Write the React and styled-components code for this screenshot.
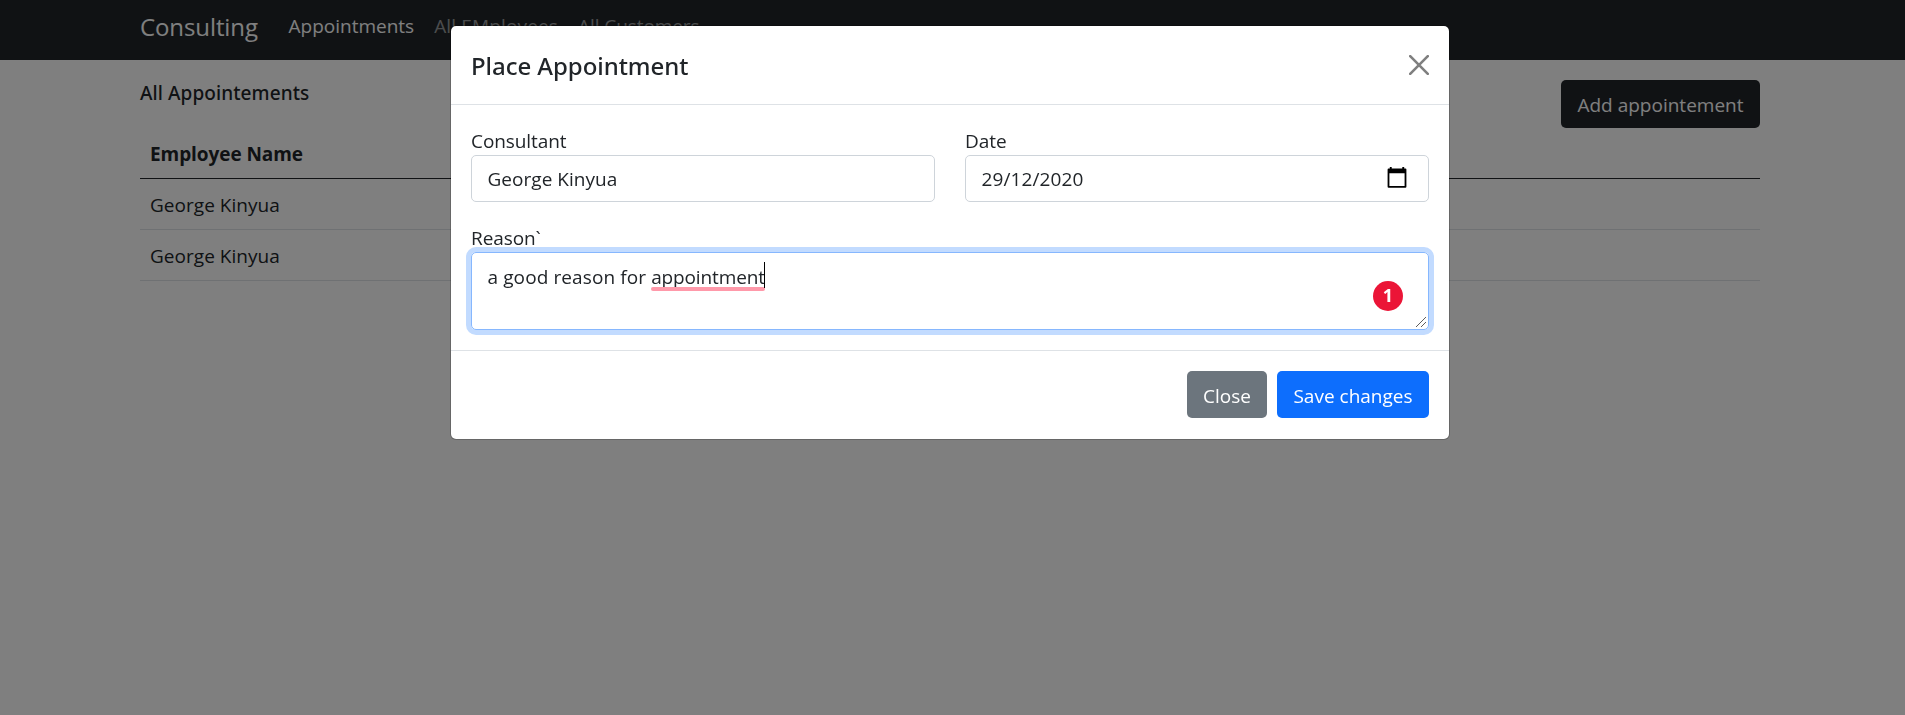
import React from 'react';
import styled, { createGlobalStyle } from 'styled-components';

const GlobalStyle = createGlobalStyle`
  *, *::before, *::after { box-sizing: border-box; }
  body {
    margin: 0;
    background: #fff;
    color: #212529;
    font-family: "Open Sans", "Noto Sans", sans-serif;
    font-size: 19px;
    line-height: 30px;
    overflow: hidden;
  }
`;

const Page = styled.div`
  min-height: 100vh;
`;

const Container = styled.div`
  width: 1620px;
  margin-left: 140px;
`;

const Navbar = styled.nav`
  height: 60px;
  background: #212529;
`;

const NavRow = styled(Container)`
  display: flex;
  align-items: flex-start;
`;

const Brand = styled.span`
  width: 148.5px;
  font-size: 24px;
  line-height: 53px;
  letter-spacing: -0.1px;
  color: #fff;
`;

const NavLink = styled.a`
  margin-right: 20px;
  line-height: 52px;
  letter-spacing: ${(p) => p.$tracking || 0}px;
  color: ${(p) => (p.$active ? '#fff' : 'rgba(255, 255, 255, 0.55)')};
  white-space: nowrap;
`;

const HeadingRow = styled(Container)`
  display: flex;
  justify-content: space-between;
  align-items: flex-start;
  padding-top: 20px;
`;

const Heading = styled.h6`
  margin: 0;
  font: 500 19px/26px "Noto Sans", sans-serif;
  letter-spacing: 0.09px;
`;

const Button = styled.button`
  width: ${(p) => p.$width}px;
  height: ${(p) => p.$height || 47}px;
  padding: 0;
  border: 0;
  border-radius: 5px;
  background: ${(p) => p.$color};
  color: #fff;
  font: inherit;
  line-height: 50px;
  text-align: center;
  white-space: nowrap;
  display: block;
`;

const Table = styled(Container)``;

const Cell = styled.div`
  padding: 11px 10px 9px;
  border-bottom: 1px solid ${(p) => (p.$head ? '#212529' : '#dee2e6')};
  font-weight: ${(p) => (p.$head ? 700 : 400)};
  letter-spacing: ${(p) => (p.$head ? -0.07 : 0.03)}px;
`;

const Backdrop = styled.div`
  position: fixed;
  inset: 0;
  padding-top: 25px;
  background: rgba(0, 0, 0, 0.5);
`;

const Dialog = styled.section`
  width: 1000px;
  margin-left: 450px;
  border: 1px solid rgba(0, 0, 0, 0.2);
  border-radius: 6px;
  background: #fff;
  background-clip: padding-box;
`;

const DialogHeader = styled.header`
  display: flex;
  align-items: center;
  justify-content: space-between;
  height: 79px;
  padding: 0 20px;
  border-bottom: 1px solid #dee2e6;
`;

const DialogTitle = styled.h5`
  margin: 0;
  padding-top: 1px;
  font: 500 24px/38px "Noto Sans", sans-serif;
  letter-spacing: -0.05px;
`;

const DialogBody = styled.div`
  display: grid;
  grid-template-columns: 1fr 1fr;
  gap: 20px 30px;
  padding: 20px;
`;

const Field = styled.div`
  grid-column: ${(p) => (p.$wide ? '1 / -1' : 'auto')};
`;

const Label = styled.label`
  display: block;
  height: 30px;
  line-height: 32px;
  letter-spacing: -0.08px;
`;

const Control = styled.div`
  display: flex;
  justify-content: space-between;
  height: 47px;
  padding: 0 21px 0 15.5px;
  border: 1px solid #ced4da;
  border-radius: 5px;
  line-height: 46px;
  letter-spacing: ${(p) => p.$tracking || 0}px;
`;

const CalendarIcon = styled.svg`
  width: 20px;
  height: 21px;
  margin-top: 11px;
`;

const TextArea = styled.div`
  position: relative;
  height: 78px;
  padding: 9px 15.5px;
  border: 1px solid #86b7fe;
  border-radius: 5px;
  box-shadow: 0 0 0 5px #c2dbff;
  letter-spacing: 0.1px;
`;

const Misspelled = styled.span`
  position: relative;
  display: inline-block;
  letter-spacing: -0.13px;

  &::before {
    content: "";
    position: absolute;
    left: 0;
    right: 0;
    top: 25px;
    height: 4px;
    border-radius: 2px;
    background: #ff99aa;
  }

  &::after {
    content: "";
    position: absolute;
    right: 0;
    top: 0;
    width: 1px;
    height: 26px;
    background: #000;
  }
`;

const ErrorBadge = styled.span`
  position: absolute;
  right: 25px;
  top: 28px;
  width: 30px;
  height: 30px;
  border-radius: 50%;
  background: #eb1537;
  color: #fff;
  font-size: 18px;
  font-weight: 700;
  line-height: 29px;
  text-align: center;
`;

const ResizeGrip = styled.svg`
  position: absolute;
  right: 2px;
  bottom: 2px;
  width: 10px;
  height: 10px;
`;

const DialogFooter = styled.footer`
  display: flex;
  justify-content: flex-end;
  gap: 10px;
  height: 89px;
  padding: 20px;
  border-top: 1px solid #dee2e6;
`;

export default function App() {
  return (
    <>
      <GlobalStyle />
      <Page>
        <Navbar>
          <NavRow>
            <Brand>Consulting</Brand>
            <NavLink $active>Appointments</NavLink>
            <NavLink $tracking={0.15}>All EMployees</NavLink>
            <NavLink $tracking={-0.08}>All Customers</NavLink>
          </NavRow>
        </Navbar>
        <HeadingRow>
          <Heading>All Appointements</Heading>
          <Button $width={199} $height={48} $color="#212529">Add appointement</Button>
        </HeadingRow>
        <Table>
          <Cell $head>Employee Name</Cell>
          <Cell>George Kinyua</Cell>
          <Cell>George Kinyua</Cell>
        </Table>
      </Page>
      <Backdrop>
        <Dialog>
          <DialogHeader>
            <DialogTitle>Place Appointment</DialogTitle>
            <svg width="20" height="20" viewBox="0 0 20 20" stroke="#7f7f7f" strokeWidth="2.6" strokeLinecap="round">
              <path d="M1.2 1.2 18.8 18.8M18.8 1.2 1.2 18.8" />
            </svg>
          </DialogHeader>
          <DialogBody>
            <Field>
              <Label>Consultant</Label>
              <Control $tracking={0.03}>George Kinyua</Control>
            </Field>
            <Field>
              <Label>Date</Label>
              <Control $tracking={0.12}>
                29/12/2020
                <CalendarIcon viewBox="0 0 20 21">
                  <path
                    fillRule="evenodd"
                    d="M2.8 0h1.9v1.5h10.6V0h1.9v1.5h1.2q1 0 1 1v17.2q0 1-1 1H1.6q-1 0-1-1V2.5q0-1 1-1h1.2zM2.4 6.3v12.6h15.2V6.3z"
                  />
                </CalendarIcon>
              </Control>
            </Field>
            <Field $wide>
              <Label>Reason`</Label>
              <TextArea>
                a good reason for <Misspelled>appointment</Misspelled>
                <ErrorBadge>1</ErrorBadge>
                <ResizeGrip viewBox="0 0 10 10" stroke="#333" strokeWidth="0.8">
                  <path d="M0 10 10 0M5 10 10 5" />
                </ResizeGrip>
              </TextArea>
            </Field>
          </DialogBody>
          <DialogFooter>
            <Button $width={80} $color="#6c757d">Close</Button>
            <Button $width={152} $color="#0d6efd">Save changes</Button>
          </DialogFooter>
        </Dialog>
      </Backdrop>
    </>
  );
}
